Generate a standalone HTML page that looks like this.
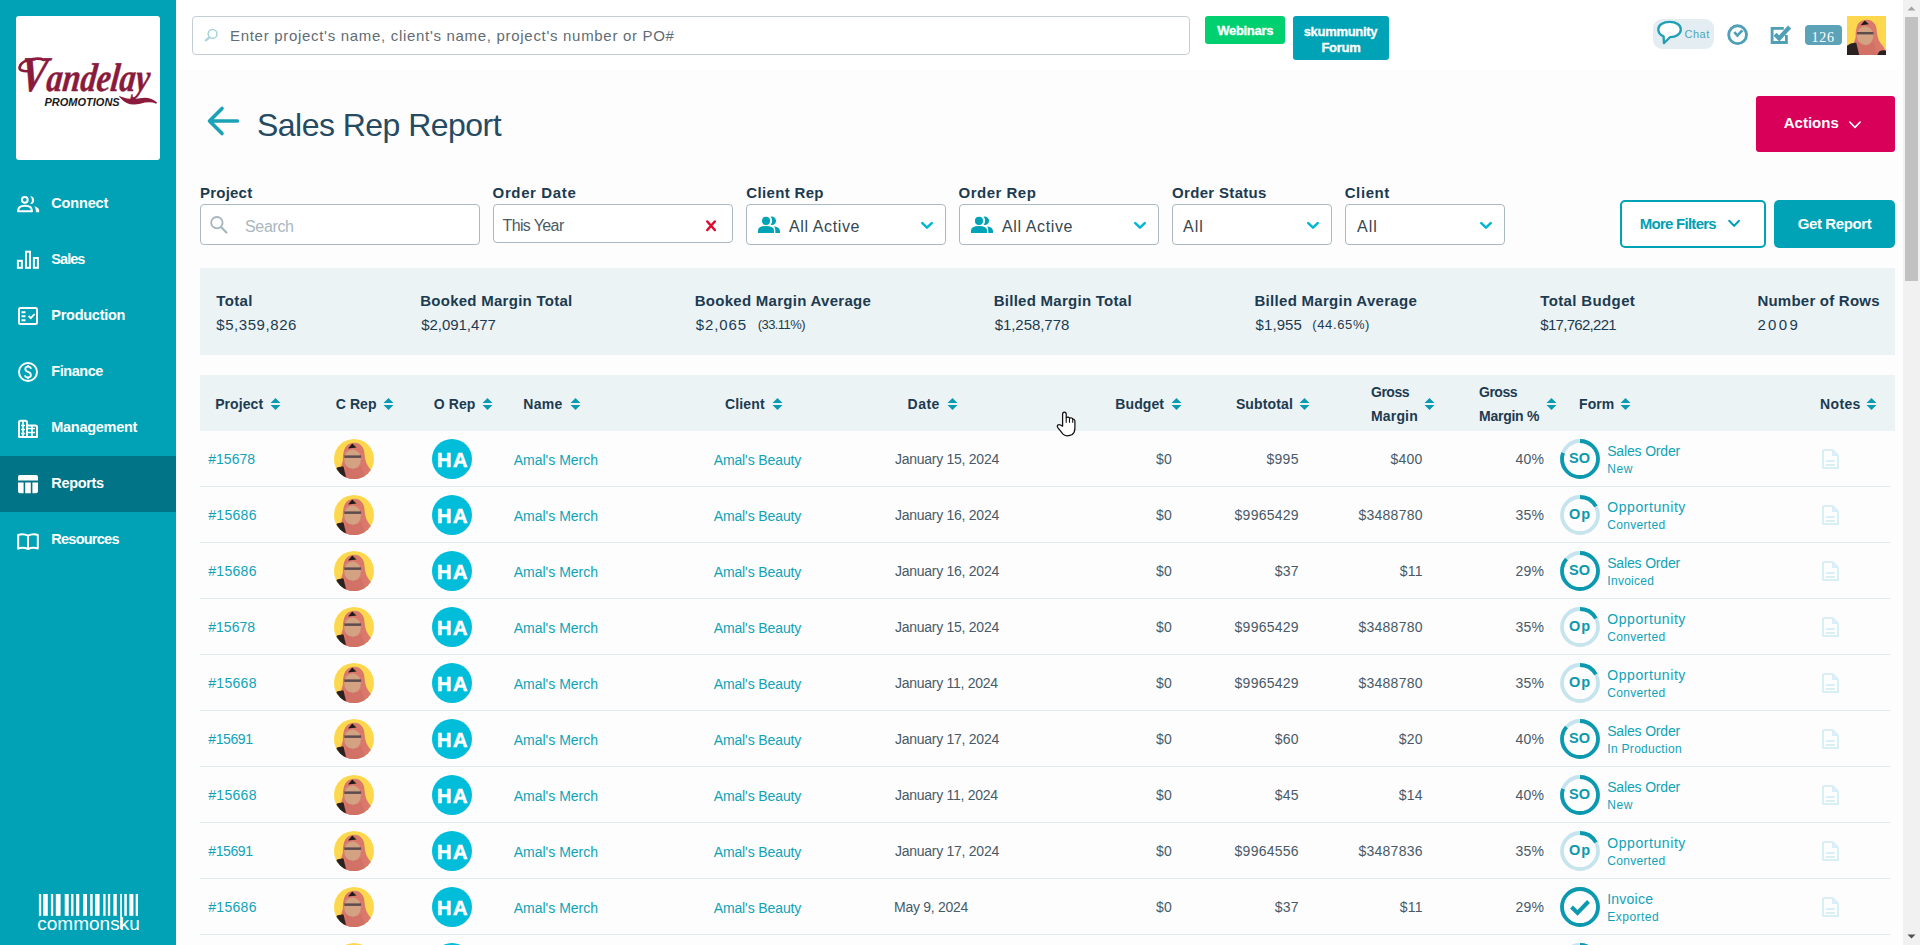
<!DOCTYPE html>
<html><head><meta charset="utf-8">
<style>
*{box-sizing:border-box;margin:0;padding:0}
html,body{width:1920px;height:945px;overflow:hidden;background:#fdfdfd;font-family:"Liberation Sans",sans-serif}
.a{position:absolute}
.t{position:absolute;white-space:nowrap;line-height:1}
</style></head>
<body>
<svg width="0" height="0" style="position:absolute"><defs>
<clipPath id="avc"><circle cx="20" cy="20" r="20"/></clipPath>
<g id="avimg">
<rect width="40" height="40" fill="#fdd84e"/>
<path d="M7.5 40 Q5.5 30 8.8 22 Q8.5 9 14 5.5 Q20 2.5 25.5 5 Q30.5 8.5 30.5 15 Q31 25 37 31 Q39.5 34 39.5 40Z" fill="#da786c"/>
<path d="M14 9.5 L18.2 4.5 L22.5 8.5 Z" fill="#1f1a1a"/>
<ellipse cx="18.6" cy="20.3" rx="8.4" ry="9.8" fill="#d3a283"/>
<rect x="10.3" y="16.4" width="16.8" height="2.5" fill="#5d4b4e"/>
<path d="M11.5 26.5 Q19.5 33.5 27.5 26.5 L31 40 H10Z" fill="#d27166"/>
<path d="M0 40 V30.5 Q4 27 9.5 27.5 L12.5 40 Z" fill="#2a2120"/>
<path d="M31 40 L33 36.5 Q37 34.5 40 35.5 V40 Z" fill="#2a2120"/>
</g>
<g id="av"><g clip-path="url(#avc)"><use href="#avimg"/></g></g>
</defs></svg>
<div class="a" style="left:0;top:0;width:176px;height:945px;background:#01a2b5"></div>
<div class="a" style="left:0;top:456px;width:176px;height:56px;background:#017487"></div>
<div class="a" style="left:16px;top:16px;width:144px;height:144px;background:#fff;border-radius:3px;overflow:hidden">
  <div class="t" style="left:2px;top:33px;font-family:'Liberation Serif',serif;font-style:italic;font-weight:bold;font-size:40px;color:#8a1b3c;-webkit-text-stroke:0.4px #8a1b3c;transform:scaleX(0.8) skewX(-8deg);transform-origin:0 100%"><span style="font-size:50px">V</span>andelay</div>
  <svg class="a" style="left:0;top:0" width="144" height="144" viewBox="16 16 144 144"><path d="M121 97.5 Q128 106 140 103 Q150 100 156.5 103 Q150 97 140 99 Q130 101 121 97.5Z" fill="#8a1b3c" stroke="#8a1b3c" stroke-width="1.5"/><path d="M31 71 Q20 72 19.5 68 Q20 61 33 59 Q40 58 44 60" fill="none" stroke="#8a1b3c" stroke-width="2.6" stroke-linecap="round"/></svg>
  <div class="t" style="left:28.5px;top:81px;font-style:italic;font-weight:bold;font-size:11px;color:#1b1b1b">PROMOTIONS</div>
</div>
<div class="a" style="left:176px;top:0;width:1727px;height:69px;background:#fff"></div>
<div class="a" style="left:192px;top:16px;width:998px;height:39px;border:1px solid #c3ced5;border-radius:4px;background:#fff"></div>
<div class="a" style="left:1205px;top:16px;width:80px;height:28px;background:#00d070;border-radius:3px"></div>
<div class="a" style="left:1293px;top:16px;width:96px;height:44px;background:#00a3b6;border-radius:3px"></div>
<div class="a" style="left:1756px;top:96px;width:139px;height:56px;background:#d9005a;border-radius:3px"></div>
<div class="a" style="left:200px;top:204px;width:280px;height:41px;border:1px solid #aab9c1;border-radius:4px;background:#fff"></div>
<div class="a" style="left:493px;top:204px;width:240px;height:39px;border:1px solid #aab9c1;border-radius:4px;background:#fff"></div>
<div class="a" style="left:746px;top:204px;width:200px;height:41px;border:1px solid #aab9c1;border-radius:4px;background:#fff"></div>
<div class="a" style="left:959px;top:204px;width:200px;height:41px;border:1px solid #aab9c1;border-radius:4px;background:#fff"></div>
<div class="a" style="left:1172px;top:204px;width:160px;height:41px;border:1px solid #aab9c1;border-radius:4px;background:#fff"></div>
<div class="a" style="left:1345px;top:204px;width:160px;height:41px;border:1px solid #aab9c1;border-radius:4px;background:#fff"></div>
<div class="a" style="left:1620px;top:200px;width:146px;height:48px;border:2.6px solid #00a3b6;border-radius:5px;background:#fff"></div>
<div class="a" style="left:1774px;top:200px;width:121px;height:48px;background:#00a3b6;border-radius:5px"></div>
<div class="a" style="left:200px;top:268px;width:1695px;height:87px;background:#ecf3f5"></div>
<div class="a" style="left:200px;top:375px;width:1695px;height:56px;background:#ecf3f5"></div>


<svg class="a" style="left:0;top:176px" width="60" height="392" viewBox="0 176 60 392" fill="none" stroke="#fff" stroke-width="2">
 <circle cx="24.8" cy="199.8" r="2.9"/>
 <path d="M18 211.2 Q18 205.8 25 205.8 Q32 205.8 32 211.2 Z" stroke-linejoin="round"/>
 <path d="M30.2 196.3 A3.9 3.9 0 1 1 30.2 204.1 A5.2 5.2 0 0 0 30.2 196.3Z" fill="#fff" stroke="none"/>
 <path d="M34.3 206.2 Q39.2 207.3 39.2 211 V212.2 H35.9 V211 Q35.9 208 34.3 206.2Z" fill="#fff" stroke="none"/>
 <rect x="17.9" y="260.8" width="4" height="7"/>
 <rect x="26" y="251.7" width="4" height="16.1"/>
 <rect x="33.9" y="258" width="4" height="9.8"/>
 <rect x="19" y="308" width="18" height="16" rx="1.5"/>
 <path d="M21.5 312.2H25.5M21.5 316.2H25.5M21.5 320.2H25.5" stroke-width="1.9"/>
 <path d="M28.6 316 L30.8 318.2 L34.6 314" stroke-width="1.8"/>
 <circle cx="28" cy="372" r="9"/>
 <path d="M31 368.8 Q30.6 366.6 28 366.6 Q25.3 366.6 25.3 369 Q25.3 371 28 371.8 Q30.9 372.7 30.9 375 Q30.9 377.4 28 377.4 Q25.3 377.4 24.9 375.3 M28 365 V366.6 M28 377.4 V379.2" stroke-width="1.8"/>
 <path d="M19 436.9 V422.5 Q19 420.7 20.8 420.7 H25.2 Q27 420.7 27 422.5 V436.9 Z M27 425.4 H35.2 Q37 425.4 37 427.2 V436.9 H19" stroke-linejoin="round"/>
 <path d="M23 421 V437 M21 425.5H25 M21 429.5H25 M21 433.5H25 M27 428.5H30 M27 432.5H30 M32 426V437 M30 428.5H35 M30 432.5H35" stroke-width="1.6"/>
 <path d="M18.2 535 Q23 533 28 535.6 Q33 533 37.8 535 V548.6 Q33 546.8 28 549 Q23 546.8 18.2 548.6 Z M28 535.6 V549" stroke-linejoin="round"/>
</svg>
<svg class="a" style="left:0;top:456px" width="60" height="56" viewBox="0 456 60 56" fill="#fff">
 <path d="M18 477 Q18 475 20 475 H36 Q38 475 38 477 V480.5 H18Z"/>
 <path d="M18 482.5 H23.6 V493.3 H20 Q18 493.3 18 491.3Z M25.2 482.5 H30.8 V493.3 H25.2Z M32.4 482.5 H38 V491.3 Q38 493.3 36 493.3 H32.4Z"/>
</svg><svg class="a" style="left:0;top:880px" width="176" height="60" viewBox="0 880 176 60" fill="#fff"><rect x="38.9" y="894" width="2.30" height="21.8"/><rect x="43.2" y="894" width="4.60" height="21.8"/><rect x="50.9" y="894" width="2.30" height="21.8"/><rect x="55.8" y="894" width="4.80" height="21.8"/><rect x="64.7" y="894" width="4.00" height="21.8"/><rect x="71" y="894" width="2.50" height="21.8"/><rect x="76.1" y="894" width="3.20" height="21.8"/><rect x="83" y="894" width="4.00" height="21.8"/><rect x="90.2" y="894" width="2.50" height="21.8"/><rect x="95" y="894" width="4.60" height="21.8"/><rect x="103.3" y="894" width="2.30" height="21.8"/><rect x="107.9" y="894" width="2.30" height="21.8"/><rect x="113.4" y="894" width="3.40" height="21.8"/><rect x="120.2" y="894" width="1.80" height="35.0"/><rect x="124.3" y="894" width="2.50" height="21.8"/><rect x="129.4" y="894" width="4.00" height="21.8"/><rect x="135.7" y="894" width="2.30" height="21.8"/></svg>
<svg class="a" style="left:200px;top:24px" width="24" height="22" viewBox="200 24 24 22" fill="none" stroke="#aad3df">
 <circle cx="212.6" cy="33.9" r="4.4" stroke-width="1.6"/><path d="M209.3 37.4 L205.9 40.4" stroke-width="2.2" stroke-linecap="round"/>
</svg>
<div class="a" style="left:1653px;top:19px;width:61px;height:30px;border-radius:9px;background:#e4edf2"></div>
<svg class="a" style="left:1650px;top:16px" width="40" height="34" viewBox="1650 16 40 34">
 <path d="M1670 37.2 C1676.2 37.2 1680.8 34 1680.8 29.5 C1680.8 25 1676.2 21.9 1669.6 21.9 C1663 21.9 1658.3 25 1658.3 29.5 C1658.3 32.6 1660.2 35 1663.6 36.4 L1663.9 43.2 Z" fill="#fff" stroke="#1f9fb2" stroke-width="2.3" stroke-linejoin="round"/>
</svg>
<svg class="a" style="left:1720px;top:16px" width="80" height="34" viewBox="1720 16 80 34" fill="none" stroke="#4f9fb6">
 <circle cx="1737.6" cy="34.7" r="8.9" stroke-width="2.9"/>
 <path d="M1734.3 32.2 L1737.4 35.6 L1742.3 30.4" stroke-width="2.7"/>
 <path d="M1786.4 35 V42.5 H1772.1 V28.4 H1783.8" stroke-width="2.8"/>
 <path d="M1775 34.3 L1779.2 38.4 L1789.6 27" stroke-width="4.2"/>
</svg>
<div class="a" style="left:1805px;top:25px;width:37px;height:20px;border-radius:4px;background:#5ca3b8"></div>
<svg class="a" style="left:1847px;top:16px" width="39" height="39" viewBox="0 0 40 40"><use href="#avimg"/></svg>
<svg class="a" style="left:200px;top:100px" width="50" height="44" viewBox="200 100 50 44" fill="none" stroke="#1aa2b6" stroke-width="3.6" stroke-linecap="round" stroke-linejoin="round">
<path d="M237.5 121 H210.5 M222 108.5 L209.5 121 L222 133.5"/></svg>
<svg class="a" style="left:200px;top:204px" width="1310" height="42" viewBox="200 204 1310 42" fill="none">
 <circle cx="216.9" cy="222.7" r="5.7" stroke="#a6b5bd" stroke-width="1.8"/>
 <path d="M221.3 227.3 L226.4 232.5" stroke="#a6b5bd" stroke-width="2.2" stroke-linecap="round"/>
 <path d="M707.3 221.5 L714.8 230 M714.8 221.5 L707.3 230" stroke="#dc0a2e" stroke-width="2.5" stroke-linecap="round"/>
 <path d="M922.3 223.2 L927 227.6 L931.7 223.2" stroke="#00b6d2" stroke-width="2.5" stroke-linecap="round" stroke-linejoin="round"/>
 <path d="M1135.3 223.2 L1140 227.6 L1144.7 223.2" stroke="#00b6d2" stroke-width="2.5" stroke-linecap="round" stroke-linejoin="round"/>
 <path d="M1308.3 223.2 L1313 227.6 L1317.7 223.2" stroke="#00b6d2" stroke-width="2.5" stroke-linecap="round" stroke-linejoin="round"/>
 <path d="M1481.3 223.2 L1486 227.6 L1490.7 223.2" stroke="#00b6d2" stroke-width="2.5" stroke-linecap="round" stroke-linejoin="round"/>
</svg>
<svg class="a" style="left:740px;top:204px" width="420" height="42" viewBox="740 204 420 42" fill="#00a3b6">
 <use href="#ppl"/><use href="#ppl" transform="translate(213 0)"/>
</svg>
<svg width="0" height="0" style="position:absolute"><defs><g id="ppl">
 <circle cx="766" cy="220.9" r="4.05"/>
 <path d="M758 233 V230.5 Q758 225.9 766 225.9 Q774 225.9 774 230.5 V233Z"/>
 <path d="M770.6 216.8 A4.2 4.2 0 1 1 770.6 224.8 A6 6 0 0 0 770.6 216.8Z"/>
 <path d="M774.3 226.3 Q780 227.6 780 231 V233 H775.3 V230.5 Q775.3 228 774.3 226.3Z"/>
</g></defs></svg>
<svg class="a" style="left:1720px;top:110px" width="180" height="130" viewBox="1720 110 180 130" fill="none">
 <path d="M1849.8 122 L1855 127.4 L1860.2 122" stroke="#fff" stroke-width="1.6" stroke-linecap="round" stroke-linejoin="round"/>
 <path d="M1729.2 220.7 L1734.1 225.9 L1739 220.7" stroke="#00a0b4" stroke-width="2" stroke-linecap="round" stroke-linejoin="round"/>
</svg>
<svg class="a" style="left:270px;top:398px" width="11" height="12" viewBox="0 0 11 12"><path d="M5.5 0L10.5 5H0.5Z M0.5 7H10.5L5.5 12Z" fill="#0b9bb0"/></svg><svg class="a" style="left:383px;top:398px" width="11" height="12" viewBox="0 0 11 12"><path d="M5.5 0L10.5 5H0.5Z M0.5 7H10.5L5.5 12Z" fill="#0b9bb0"/></svg><svg class="a" style="left:482px;top:398px" width="11" height="12" viewBox="0 0 11 12"><path d="M5.5 0L10.5 5H0.5Z M0.5 7H10.5L5.5 12Z" fill="#0b9bb0"/></svg><svg class="a" style="left:570px;top:398px" width="11" height="12" viewBox="0 0 11 12"><path d="M5.5 0L10.5 5H0.5Z M0.5 7H10.5L5.5 12Z" fill="#0b9bb0"/></svg><svg class="a" style="left:772px;top:398px" width="11" height="12" viewBox="0 0 11 12"><path d="M5.5 0L10.5 5H0.5Z M0.5 7H10.5L5.5 12Z" fill="#0b9bb0"/></svg><svg class="a" style="left:947px;top:398px" width="11" height="12" viewBox="0 0 11 12"><path d="M5.5 0L10.5 5H0.5Z M0.5 7H10.5L5.5 12Z" fill="#0b9bb0"/></svg><svg class="a" style="left:1171px;top:398px" width="11" height="12" viewBox="0 0 11 12"><path d="M5.5 0L10.5 5H0.5Z M0.5 7H10.5L5.5 12Z" fill="#0b9bb0"/></svg><svg class="a" style="left:1299px;top:398px" width="11" height="12" viewBox="0 0 11 12"><path d="M5.5 0L10.5 5H0.5Z M0.5 7H10.5L5.5 12Z" fill="#0b9bb0"/></svg><svg class="a" style="left:1424px;top:398px" width="11" height="12" viewBox="0 0 11 12"><path d="M5.5 0L10.5 5H0.5Z M0.5 7H10.5L5.5 12Z" fill="#0b9bb0"/></svg><svg class="a" style="left:1546px;top:398px" width="11" height="12" viewBox="0 0 11 12"><path d="M5.5 0L10.5 5H0.5Z M0.5 7H10.5L5.5 12Z" fill="#0b9bb0"/></svg><svg class="a" style="left:1620px;top:398px" width="11" height="12" viewBox="0 0 11 12"><path d="M5.5 0L10.5 5H0.5Z M0.5 7H10.5L5.5 12Z" fill="#0b9bb0"/></svg><svg class="a" style="left:1866px;top:398px" width="11" height="12" viewBox="0 0 11 12"><path d="M5.5 0L10.5 5H0.5Z M0.5 7H10.5L5.5 12Z" fill="#0b9bb0"/></svg><svg class="a" style="left:334px;top:439px" width="40" height="40" viewBox="0 0 40 40"><use href="#av"/></svg><div class="a" style="left:432px;top:439px;width:40px;height:40px;border-radius:50%;background:#00bdd9"></div><svg class="a" style="left:1560px;top:439px" width="40" height="40" viewBox="0 0 40 40"><circle cx="20" cy="20" r="18" fill="none" stroke="#c6e4ed" stroke-width="3.8"/><circle cx="20" cy="20" r="18" fill="none" stroke="#0a99ae" stroke-width="3.8" stroke-dasharray="90.48 113.10" transform="rotate(-90 20 20)"/></svg><svg class="a" style="left:1822px;top:449px" width="17" height="20" viewBox="0 0 17 20"><path d="M2 1 H10.5 L16 6.5 V19 H1 V2 Z" fill="none" stroke="#d9eff6" stroke-width="2" stroke-linejoin="round"/><path d="M10 1 V7 H16Z" fill="#d9eff6"/><path d="M4 12H13M4 16H13" stroke="#d9eff6" stroke-width="2"/></svg><div class="a" style="left:200px;top:486px;width:1690px;height:1px;background:#dfeaee"></div>
<svg class="a" style="left:334px;top:495px" width="40" height="40" viewBox="0 0 40 40"><use href="#av"/></svg><div class="a" style="left:432px;top:495px;width:40px;height:40px;border-radius:50%;background:#00bdd9"></div><svg class="a" style="left:1560px;top:495px" width="40" height="40" viewBox="0 0 40 40"><circle cx="20" cy="20" r="18" fill="none" stroke="#c6e4ed" stroke-width="3.8"/><circle cx="20" cy="20" r="18" fill="none" stroke="#0a99ae" stroke-width="3.8" stroke-dasharray="19.23 113.10" transform="rotate(-90 20 20)"/></svg><svg class="a" style="left:1822px;top:505px" width="17" height="20" viewBox="0 0 17 20"><path d="M2 1 H10.5 L16 6.5 V19 H1 V2 Z" fill="none" stroke="#d9eff6" stroke-width="2" stroke-linejoin="round"/><path d="M10 1 V7 H16Z" fill="#d9eff6"/><path d="M4 12H13M4 16H13" stroke="#d9eff6" stroke-width="2"/></svg><div class="a" style="left:200px;top:542px;width:1690px;height:1px;background:#dfeaee"></div>
<svg class="a" style="left:334px;top:551px" width="40" height="40" viewBox="0 0 40 40"><use href="#av"/></svg><div class="a" style="left:432px;top:551px;width:40px;height:40px;border-radius:50%;background:#00bdd9"></div><svg class="a" style="left:1560px;top:551px" width="40" height="40" viewBox="0 0 40 40"><circle cx="20" cy="20" r="18" fill="none" stroke="#c6e4ed" stroke-width="3.8"/><circle cx="20" cy="20" r="18" fill="none" stroke="#0a99ae" stroke-width="3.8" stroke-dasharray="97.26 113.10" transform="rotate(-90 20 20)"/></svg><svg class="a" style="left:1822px;top:561px" width="17" height="20" viewBox="0 0 17 20"><path d="M2 1 H10.5 L16 6.5 V19 H1 V2 Z" fill="none" stroke="#d9eff6" stroke-width="2" stroke-linejoin="round"/><path d="M10 1 V7 H16Z" fill="#d9eff6"/><path d="M4 12H13M4 16H13" stroke="#d9eff6" stroke-width="2"/></svg><div class="a" style="left:200px;top:598px;width:1690px;height:1px;background:#dfeaee"></div>
<svg class="a" style="left:334px;top:607px" width="40" height="40" viewBox="0 0 40 40"><use href="#av"/></svg><div class="a" style="left:432px;top:607px;width:40px;height:40px;border-radius:50%;background:#00bdd9"></div><svg class="a" style="left:1560px;top:607px" width="40" height="40" viewBox="0 0 40 40"><circle cx="20" cy="20" r="18" fill="none" stroke="#c6e4ed" stroke-width="3.8"/><circle cx="20" cy="20" r="18" fill="none" stroke="#0a99ae" stroke-width="3.8" stroke-dasharray="19.23 113.10" transform="rotate(-90 20 20)"/></svg><svg class="a" style="left:1822px;top:617px" width="17" height="20" viewBox="0 0 17 20"><path d="M2 1 H10.5 L16 6.5 V19 H1 V2 Z" fill="none" stroke="#d9eff6" stroke-width="2" stroke-linejoin="round"/><path d="M10 1 V7 H16Z" fill="#d9eff6"/><path d="M4 12H13M4 16H13" stroke="#d9eff6" stroke-width="2"/></svg><div class="a" style="left:200px;top:654px;width:1690px;height:1px;background:#dfeaee"></div>
<svg class="a" style="left:334px;top:663px" width="40" height="40" viewBox="0 0 40 40"><use href="#av"/></svg><div class="a" style="left:432px;top:663px;width:40px;height:40px;border-radius:50%;background:#00bdd9"></div><svg class="a" style="left:1560px;top:663px" width="40" height="40" viewBox="0 0 40 40"><circle cx="20" cy="20" r="18" fill="none" stroke="#c6e4ed" stroke-width="3.8"/><circle cx="20" cy="20" r="18" fill="none" stroke="#0a99ae" stroke-width="3.8" stroke-dasharray="19.23 113.10" transform="rotate(-90 20 20)"/></svg><svg class="a" style="left:1822px;top:673px" width="17" height="20" viewBox="0 0 17 20"><path d="M2 1 H10.5 L16 6.5 V19 H1 V2 Z" fill="none" stroke="#d9eff6" stroke-width="2" stroke-linejoin="round"/><path d="M10 1 V7 H16Z" fill="#d9eff6"/><path d="M4 12H13M4 16H13" stroke="#d9eff6" stroke-width="2"/></svg><div class="a" style="left:200px;top:710px;width:1690px;height:1px;background:#dfeaee"></div>
<svg class="a" style="left:334px;top:719px" width="40" height="40" viewBox="0 0 40 40"><use href="#av"/></svg><div class="a" style="left:432px;top:719px;width:40px;height:40px;border-radius:50%;background:#00bdd9"></div><svg class="a" style="left:1560px;top:719px" width="40" height="40" viewBox="0 0 40 40"><circle cx="20" cy="20" r="18" fill="none" stroke="#c6e4ed" stroke-width="3.8"/><circle cx="20" cy="20" r="18" fill="none" stroke="#0a99ae" stroke-width="3.8" stroke-dasharray="97.26 113.10" transform="rotate(-90 20 20)"/></svg><svg class="a" style="left:1822px;top:729px" width="17" height="20" viewBox="0 0 17 20"><path d="M2 1 H10.5 L16 6.5 V19 H1 V2 Z" fill="none" stroke="#d9eff6" stroke-width="2" stroke-linejoin="round"/><path d="M10 1 V7 H16Z" fill="#d9eff6"/><path d="M4 12H13M4 16H13" stroke="#d9eff6" stroke-width="2"/></svg><div class="a" style="left:200px;top:766px;width:1690px;height:1px;background:#dfeaee"></div>
<svg class="a" style="left:334px;top:775px" width="40" height="40" viewBox="0 0 40 40"><use href="#av"/></svg><div class="a" style="left:432px;top:775px;width:40px;height:40px;border-radius:50%;background:#00bdd9"></div><svg class="a" style="left:1560px;top:775px" width="40" height="40" viewBox="0 0 40 40"><circle cx="20" cy="20" r="18" fill="none" stroke="#c6e4ed" stroke-width="3.8"/><circle cx="20" cy="20" r="18" fill="none" stroke="#0a99ae" stroke-width="3.8" stroke-dasharray="90.48 113.10" transform="rotate(-90 20 20)"/></svg><svg class="a" style="left:1822px;top:785px" width="17" height="20" viewBox="0 0 17 20"><path d="M2 1 H10.5 L16 6.5 V19 H1 V2 Z" fill="none" stroke="#d9eff6" stroke-width="2" stroke-linejoin="round"/><path d="M10 1 V7 H16Z" fill="#d9eff6"/><path d="M4 12H13M4 16H13" stroke="#d9eff6" stroke-width="2"/></svg><div class="a" style="left:200px;top:822px;width:1690px;height:1px;background:#dfeaee"></div>
<svg class="a" style="left:334px;top:831px" width="40" height="40" viewBox="0 0 40 40"><use href="#av"/></svg><div class="a" style="left:432px;top:831px;width:40px;height:40px;border-radius:50%;background:#00bdd9"></div><svg class="a" style="left:1560px;top:831px" width="40" height="40" viewBox="0 0 40 40"><circle cx="20" cy="20" r="18" fill="none" stroke="#c6e4ed" stroke-width="3.8"/><circle cx="20" cy="20" r="18" fill="none" stroke="#0a99ae" stroke-width="3.8" stroke-dasharray="19.23 113.10" transform="rotate(-90 20 20)"/></svg><svg class="a" style="left:1822px;top:841px" width="17" height="20" viewBox="0 0 17 20"><path d="M2 1 H10.5 L16 6.5 V19 H1 V2 Z" fill="none" stroke="#d9eff6" stroke-width="2" stroke-linejoin="round"/><path d="M10 1 V7 H16Z" fill="#d9eff6"/><path d="M4 12H13M4 16H13" stroke="#d9eff6" stroke-width="2"/></svg><div class="a" style="left:200px;top:878px;width:1690px;height:1px;background:#dfeaee"></div>
<svg class="a" style="left:334px;top:887px" width="40" height="40" viewBox="0 0 40 40"><use href="#av"/></svg><div class="a" style="left:432px;top:887px;width:40px;height:40px;border-radius:50%;background:#00bdd9"></div><svg class="a" style="left:1560px;top:887px" width="40" height="40" viewBox="0 0 40 40"><circle cx="20" cy="20" r="18" fill="none" stroke="#c6e4ed" stroke-width="3.8"/><circle cx="20" cy="20" r="18" fill="none" stroke="#0a99ae" stroke-width="3.8"/><path d="M11.5 20 L17.5 26 L28.5 14.5" fill="none" stroke="#0a99ae" stroke-width="4"/></svg><svg class="a" style="left:1822px;top:897px" width="17" height="20" viewBox="0 0 17 20"><path d="M2 1 H10.5 L16 6.5 V19 H1 V2 Z" fill="none" stroke="#d9eff6" stroke-width="2" stroke-linejoin="round"/><path d="M10 1 V7 H16Z" fill="#d9eff6"/><path d="M4 12H13M4 16H13" stroke="#d9eff6" stroke-width="2"/></svg><div class="a" style="left:200px;top:934px;width:1690px;height:1px;background:#dfeaee"></div>
<svg class="a" style="left:334px;top:943px" width="40" height="40" viewBox="0 0 40 40"><use href="#av"/></svg><div class="a" style="left:432px;top:943px;width:40px;height:40px;border-radius:50%;background:#00bdd9"></div><svg class="a" style="left:1560px;top:943px" width="40" height="40" viewBox="0 0 40 40"><circle cx="20" cy="20" r="18" fill="none" stroke="#c6e4ed" stroke-width="3.8"/><circle cx="20" cy="20" r="18" fill="none" stroke="#0a99ae" stroke-width="3.8" stroke-dasharray="90.48 113.10" transform="rotate(-90 20 20)"/></svg><svg class="a" style="left:1822px;top:953px" width="17" height="20" viewBox="0 0 17 20"><path d="M2 1 H10.5 L16 6.5 V19 H1 V2 Z" fill="none" stroke="#d9eff6" stroke-width="2" stroke-linejoin="round"/><path d="M10 1 V7 H16Z" fill="#d9eff6"/><path d="M4 12H13M4 16H13" stroke="#d9eff6" stroke-width="2"/></svg><div class="a" style="left:200px;top:990px;width:1690px;height:1px;background:#dfeaee"></div>
<div class="a" style="left:1903px;top:0;width:17px;height:945px;background:#f1f1f1"></div>
<div class="a" style="left:1905px;top:17px;width:13px;height:264px;background:#c1c1c1"></div>
<svg class="a" style="left:1903px;top:0" width="17" height="17" viewBox="0 0 17 17"><path d="M4.5 10.5 L8.5 6.5 L12.5 10.5Z" fill="#a3a3a3"/></svg>
<svg class="a" style="left:1903px;top:928px" width="17" height="17" viewBox="0 0 17 17"><path d="M4.5 6.5 L8.5 10.5 L12.5 6.5Z" fill="#505050"/></svg>
<div class="t" style="left:51.30px;top:195.90px;font-family:'Liberation Sans',sans-serif;font-size:14.5px;font-weight:bold;letter-spacing:-0.167px;color:#ffffff;">Connect</div>
<div class="t" style="left:51.30px;top:251.90px;font-family:'Liberation Sans',sans-serif;font-size:14.5px;font-weight:bold;letter-spacing:-0.950px;color:#ffffff;">Sales</div>
<div class="t" style="left:51.30px;top:307.90px;font-family:'Liberation Sans',sans-serif;font-size:14.5px;font-weight:bold;letter-spacing:-0.267px;color:#ffffff;">Production</div>
<div class="t" style="left:51.30px;top:363.90px;font-family:'Liberation Sans',sans-serif;font-size:14.5px;font-weight:bold;letter-spacing:-0.467px;color:#ffffff;">Finance</div>
<div class="t" style="left:51.30px;top:419.90px;font-family:'Liberation Sans',sans-serif;font-size:14.5px;font-weight:bold;letter-spacing:-0.289px;color:#ffffff;">Management</div>
<div class="t" style="left:51.30px;top:475.90px;font-family:'Liberation Sans',sans-serif;font-size:14.5px;font-weight:bold;letter-spacing:-0.333px;color:#ffffff;">Reports</div>
<div class="t" style="left:51.30px;top:531.90px;font-family:'Liberation Sans',sans-serif;font-size:14.5px;font-weight:bold;letter-spacing:-0.750px;color:#ffffff;">Resources</div>
<div class="t" style="left:230.00px;top:27.50px;font-family:'Liberation Sans',sans-serif;font-size:15px;font-weight:normal;letter-spacing:0.695px;color:#626c74;">Enter project's name, client's name, project's number or PO#</div>
<div class="t" style="left:1217.20px;top:23.90px;font-family:'Liberation Sans',sans-serif;font-size:13px;font-weight:bold;letter-spacing:-0.286px;color:#fff;-webkit-text-stroke:0.3px #fff">Webinars</div>
<div class="t" style="left:1303.70px;top:24.50px;font-family:'Liberation Sans',sans-serif;font-size:13px;font-weight:bold;letter-spacing:-0.300px;color:#fff;-webkit-text-stroke:0.3px #fff">skummunity</div>
<div class="t" style="left:1321.40px;top:41.30px;font-family:'Liberation Sans',sans-serif;font-size:13px;font-weight:bold;letter-spacing:-0.250px;color:#fff;-webkit-text-stroke:0.3px #fff">Forum</div>
<div class="t" style="left:1684.50px;top:29.30px;font-family:'Liberation Sans',sans-serif;font-size:11px;font-weight:normal;letter-spacing:0.500px;color:#4aa8b8;">Chat</div>
<div class="t" style="left:1811.50px;top:30.50px;font-family:'Liberation Serif',serif;font-size:14px;font-weight:normal;letter-spacing:0.750px;color:#fff;">126</div>
<div class="t" style="left:257.00px;top:108.60px;font-family:'Liberation Sans',sans-serif;font-size:32px;font-weight:normal;letter-spacing:-0.533px;color:#254a62;">Sales Rep Report</div>
<div class="t" style="left:1783.75px;top:115.30px;font-family:'Liberation Sans',sans-serif;font-size:15px;font-weight:bold;letter-spacing:0.000px;color:#fff;">Actions</div>
<div class="t" style="left:200.00px;top:185.00px;font-family:'Liberation Sans',sans-serif;font-size:15px;font-weight:bold;letter-spacing:0.217px;color:#1c3b50;">Project</div>
<div class="t" style="left:492.60px;top:185.00px;font-family:'Liberation Sans',sans-serif;font-size:15px;font-weight:bold;letter-spacing:0.622px;color:#1c3b50;">Order Date</div>
<div class="t" style="left:746.30px;top:185.00px;font-family:'Liberation Sans',sans-serif;font-size:15px;font-weight:bold;letter-spacing:0.333px;color:#1c3b50;">Client Rep</div>
<div class="t" style="left:958.50px;top:185.00px;font-family:'Liberation Sans',sans-serif;font-size:15px;font-weight:bold;letter-spacing:0.500px;color:#1c3b50;">Order Rep</div>
<div class="t" style="left:1172.00px;top:185.00px;font-family:'Liberation Sans',sans-serif;font-size:15px;font-weight:bold;letter-spacing:0.327px;color:#1c3b50;">Order Status</div>
<div class="t" style="left:1344.70px;top:185.00px;font-family:'Liberation Sans',sans-serif;font-size:15px;font-weight:bold;letter-spacing:0.600px;color:#1c3b50;">Client</div>
<div class="t" style="left:245.00px;top:219.30px;font-family:'Liberation Sans',sans-serif;font-size:16px;font-weight:normal;letter-spacing:-0.340px;color:#a9b7bf;">Search</div>
<div class="t" style="left:502.50px;top:217.70px;font-family:'Liberation Sans',sans-serif;font-size:16px;font-weight:normal;letter-spacing:-0.625px;color:#4d5b64;">This Year</div>
<div class="t" style="left:789.00px;top:219.30px;font-family:'Liberation Sans',sans-serif;font-size:16px;font-weight:normal;letter-spacing:0.611px;color:#36474f;">All Active</div>
<div class="t" style="left:1002.00px;top:219.30px;font-family:'Liberation Sans',sans-serif;font-size:16px;font-weight:normal;letter-spacing:0.611px;color:#36474f;">All Active</div>
<div class="t" style="left:1183.00px;top:219.30px;font-family:'Liberation Sans',sans-serif;font-size:16px;font-weight:normal;letter-spacing:1.000px;color:#36474f;">All</div>
<div class="t" style="left:1357.00px;top:219.30px;font-family:'Liberation Sans',sans-serif;font-size:16px;font-weight:normal;letter-spacing:1.000px;color:#36474f;">All</div>
<div class="t" style="left:1639.70px;top:215.90px;font-family:'Liberation Sans',sans-serif;font-size:15px;font-weight:bold;letter-spacing:-0.727px;color:#00a0b4;">More Filters</div>
<div class="t" style="left:1797.70px;top:215.90px;font-family:'Liberation Sans',sans-serif;font-size:15px;font-weight:bold;letter-spacing:-0.378px;color:#fff;">Get Report</div>
<div class="t" style="left:216.30px;top:292.50px;font-family:'Liberation Sans',sans-serif;font-size:15px;font-weight:bold;letter-spacing:0.350px;color:#1c3b50;">Total</div>
<div class="t" style="left:216.30px;top:316.60px;font-family:'Liberation Sans',sans-serif;font-size:15px;font-weight:normal;letter-spacing:0.556px;color:#1c3b50;">$5,359,826</div>
<div class="t" style="left:420.20px;top:292.50px;font-family:'Liberation Sans',sans-serif;font-size:15px;font-weight:bold;letter-spacing:0.267px;color:#1c3b50;">Booked Margin Total</div>
<div class="t" style="left:421.20px;top:316.60px;font-family:'Liberation Sans',sans-serif;font-size:15px;font-weight:normal;letter-spacing:-0.033px;color:#1c3b50;">$2,091,477</div>
<div class="t" style="left:694.70px;top:292.50px;font-family:'Liberation Sans',sans-serif;font-size:15px;font-weight:bold;letter-spacing:0.275px;color:#1c3b50;">Booked Margin Average</div>
<div class="t" style="left:695.70px;top:316.60px;font-family:'Liberation Sans',sans-serif;font-size:15px;font-weight:normal;letter-spacing:0.900px;color:#1c3b50;">$2,065</div>
<div class="t" style="left:757.75px;top:317.60px;font-family:'Liberation Sans',sans-serif;font-size:13px;font-weight:normal;letter-spacing:-0.571px;color:#1c3b50;">(33.11%)</div>
<div class="t" style="left:993.70px;top:292.50px;font-family:'Liberation Sans',sans-serif;font-size:15px;font-weight:bold;letter-spacing:0.267px;color:#1c3b50;">Billed Margin Total</div>
<div class="t" style="left:994.70px;top:316.60px;font-family:'Liberation Sans',sans-serif;font-size:15px;font-weight:normal;letter-spacing:-0.056px;color:#1c3b50;">$1,258,778</div>
<div class="t" style="left:1254.50px;top:292.50px;font-family:'Liberation Sans',sans-serif;font-size:15px;font-weight:bold;letter-spacing:0.290px;color:#1c3b50;">Billed Margin Average</div>
<div class="t" style="left:1255.50px;top:316.60px;font-family:'Liberation Sans',sans-serif;font-size:15px;font-weight:normal;letter-spacing:0.100px;color:#1c3b50;">$1,955</div>
<div class="t" style="left:1312.30px;top:317.60px;font-family:'Liberation Sans',sans-serif;font-size:13px;font-weight:normal;letter-spacing:0.629px;color:#1c3b50;">(44.65%)</div>
<div class="t" style="left:1540.30px;top:292.50px;font-family:'Liberation Sans',sans-serif;font-size:15px;font-weight:bold;letter-spacing:0.364px;color:#1c3b50;">Total Budget</div>
<div class="t" style="left:1540.30px;top:316.60px;font-family:'Liberation Sans',sans-serif;font-size:15px;font-weight:normal;letter-spacing:-0.700px;color:#1c3b50;">$17,762,221</div>
<div class="t" style="left:1757.40px;top:292.50px;font-family:'Liberation Sans',sans-serif;font-size:15px;font-weight:bold;letter-spacing:0.231px;color:#1c3b50;">Number of Rows</div>
<div class="t" style="left:1757.40px;top:316.60px;font-family:'Liberation Sans',sans-serif;font-size:15px;font-weight:normal;letter-spacing:2.333px;color:#1c3b50;">2009</div>
<div class="t" style="left:215.20px;top:396.70px;font-family:'Liberation Sans',sans-serif;font-size:14px;font-weight:bold;letter-spacing:0.067px;color:#1c3b50;">Project</div>
<div class="t" style="left:335.80px;top:396.70px;font-family:'Liberation Sans',sans-serif;font-size:14px;font-weight:bold;letter-spacing:0.050px;color:#1c3b50;">C Rep</div>
<div class="t" style="left:433.70px;top:396.70px;font-family:'Liberation Sans',sans-serif;font-size:14px;font-weight:bold;letter-spacing:0.125px;color:#1c3b50;">O Rep</div>
<div class="t" style="left:523.20px;top:396.70px;font-family:'Liberation Sans',sans-serif;font-size:14px;font-weight:bold;letter-spacing:0.333px;color:#1c3b50;">Name</div>
<div class="t" style="left:724.90px;top:396.70px;font-family:'Liberation Sans',sans-serif;font-size:14px;font-weight:bold;letter-spacing:0.160px;color:#1c3b50;">Client</div>
<div class="t" style="left:907.60px;top:396.70px;font-family:'Liberation Sans',sans-serif;font-size:14px;font-weight:bold;letter-spacing:0.467px;color:#1c3b50;">Date</div>
<div class="t" style="left:1115.30px;top:396.70px;font-family:'Liberation Sans',sans-serif;font-size:14px;font-weight:bold;letter-spacing:0.100px;color:#1c3b50;">Budget</div>
<div class="t" style="left:1235.90px;top:396.70px;font-family:'Liberation Sans',sans-serif;font-size:14px;font-weight:bold;letter-spacing:0.143px;color:#1c3b50;">Subtotal</div>
<div class="t" style="left:1579.00px;top:396.70px;font-family:'Liberation Sans',sans-serif;font-size:14px;font-weight:bold;letter-spacing:0.100px;color:#1c3b50;">Form</div>
<div class="t" style="left:1820.00px;top:396.70px;font-family:'Liberation Sans',sans-serif;font-size:14px;font-weight:bold;letter-spacing:0.375px;color:#1c3b50;">Notes</div>
<div class="t" style="left:1371.00px;top:384.80px;font-family:'Liberation Sans',sans-serif;font-size:14px;font-weight:bold;letter-spacing:-0.500px;color:#1c3b50;">Gross</div>
<div class="t" style="left:1371.00px;top:409.30px;font-family:'Liberation Sans',sans-serif;font-size:14px;font-weight:bold;letter-spacing:0.160px;color:#1c3b50;">Margin</div>
<div class="t" style="left:1479.00px;top:384.80px;font-family:'Liberation Sans',sans-serif;font-size:14px;font-weight:bold;letter-spacing:-0.500px;color:#1c3b50;">Gross</div>
<div class="t" style="left:1479.00px;top:409.30px;font-family:'Liberation Sans',sans-serif;font-size:14px;font-weight:bold;letter-spacing:-0.243px;color:#1c3b50;">Margin %</div>
<div class="t" style="left:208.30px;top:452.00px;font-family:'Liberation Sans',sans-serif;font-size:14px;font-weight:normal;letter-spacing:0.000px;color:#0fa3b8;">#15678</div>
<div class="t" style="left:513.70px;top:452.50px;font-family:'Liberation Sans',sans-serif;font-size:14px;font-weight:normal;letter-spacing:0.000px;color:#0fa3b8;">Amal's Merch</div>
<div class="t" style="left:713.70px;top:452.50px;font-family:'Liberation Sans',sans-serif;font-size:14px;font-weight:normal;letter-spacing:-0.117px;color:#0fa3b8;">Amal's Beauty</div>
<div class="t" style="left:895.00px;top:452.30px;font-family:'Liberation Sans',sans-serif;font-size:14px;font-weight:normal;letter-spacing:-0.267px;color:#475a68;">January 15, 2024</div>
<div class="t" style="left:1156.06px;top:451.60px;font-family:'Liberation Sans',sans-serif;font-size:14px;font-weight:normal;letter-spacing:0.243px;color:#475a68;">$0</div>
<div class="t" style="left:1266.57px;top:451.60px;font-family:'Liberation Sans',sans-serif;font-size:14px;font-weight:normal;letter-spacing:0.243px;color:#475a68;">$995</div>
<div class="t" style="left:1390.47px;top:451.60px;font-family:'Liberation Sans',sans-serif;font-size:14px;font-weight:normal;letter-spacing:0.243px;color:#475a68;">$400</div>
<div class="t" style="left:1515.50px;top:451.60px;font-family:'Liberation Sans',sans-serif;font-size:14px;font-weight:normal;letter-spacing:0.250px;color:#475a68;">40%</div>
<div class="t" style="left:1607.20px;top:444.40px;font-family:'Liberation Sans',sans-serif;font-size:14px;font-weight:normal;letter-spacing:-0.160px;color:#0fa3b8;">Sales Order</div>
<div class="t" style="left:1607.30px;top:462.50px;font-family:'Liberation Sans',sans-serif;font-size:12px;font-weight:normal;letter-spacing:0.500px;color:#0fa3b8;">New</div>
<div class="t" style="left:1569.00px;top:450.90px;font-family:'Liberation Sans',sans-serif;font-size:14.5px;font-weight:bold;letter-spacing:0.000px;color:#0a99ae;">SO</div>
<div class="t" style="left:208.30px;top:508.00px;font-family:'Liberation Sans',sans-serif;font-size:14px;font-weight:normal;letter-spacing:0.280px;color:#0fa3b8;">#15686</div>
<div class="t" style="left:513.70px;top:508.50px;font-family:'Liberation Sans',sans-serif;font-size:14px;font-weight:normal;letter-spacing:0.000px;color:#0fa3b8;">Amal's Merch</div>
<div class="t" style="left:713.70px;top:508.50px;font-family:'Liberation Sans',sans-serif;font-size:14px;font-weight:normal;letter-spacing:-0.117px;color:#0fa3b8;">Amal's Beauty</div>
<div class="t" style="left:895.00px;top:508.30px;font-family:'Liberation Sans',sans-serif;font-size:14px;font-weight:normal;letter-spacing:-0.267px;color:#475a68;">January 16, 2024</div>
<div class="t" style="left:1156.06px;top:507.60px;font-family:'Liberation Sans',sans-serif;font-size:14px;font-weight:normal;letter-spacing:0.243px;color:#475a68;">$0</div>
<div class="t" style="left:1234.60px;top:507.60px;font-family:'Liberation Sans',sans-serif;font-size:14px;font-weight:normal;letter-spacing:0.243px;color:#475a68;">$9965429</div>
<div class="t" style="left:1358.50px;top:507.60px;font-family:'Liberation Sans',sans-serif;font-size:14px;font-weight:normal;letter-spacing:0.243px;color:#475a68;">$3488780</div>
<div class="t" style="left:1515.50px;top:507.60px;font-family:'Liberation Sans',sans-serif;font-size:14px;font-weight:normal;letter-spacing:0.250px;color:#475a68;">35%</div>
<div class="t" style="left:1607.20px;top:500.40px;font-family:'Liberation Sans',sans-serif;font-size:14px;font-weight:normal;letter-spacing:0.580px;color:#0fa3b8;">Opportunity</div>
<div class="t" style="left:1607.30px;top:518.50px;font-family:'Liberation Sans',sans-serif;font-size:12px;font-weight:normal;letter-spacing:0.300px;color:#0fa3b8;">Converted</div>
<div class="t" style="left:1569.00px;top:506.90px;font-family:'Liberation Sans',sans-serif;font-size:14.5px;font-weight:bold;letter-spacing:1.000px;color:#0a99ae;">Op</div>
<div class="t" style="left:208.30px;top:564.00px;font-family:'Liberation Sans',sans-serif;font-size:14px;font-weight:normal;letter-spacing:0.280px;color:#0fa3b8;">#15686</div>
<div class="t" style="left:513.70px;top:564.50px;font-family:'Liberation Sans',sans-serif;font-size:14px;font-weight:normal;letter-spacing:0.000px;color:#0fa3b8;">Amal's Merch</div>
<div class="t" style="left:713.70px;top:564.50px;font-family:'Liberation Sans',sans-serif;font-size:14px;font-weight:normal;letter-spacing:-0.117px;color:#0fa3b8;">Amal's Beauty</div>
<div class="t" style="left:895.00px;top:564.30px;font-family:'Liberation Sans',sans-serif;font-size:14px;font-weight:normal;letter-spacing:-0.267px;color:#475a68;">January 16, 2024</div>
<div class="t" style="left:1156.06px;top:563.60px;font-family:'Liberation Sans',sans-serif;font-size:14px;font-weight:normal;letter-spacing:0.243px;color:#475a68;">$0</div>
<div class="t" style="left:1274.81px;top:563.60px;font-family:'Liberation Sans',sans-serif;font-size:14px;font-weight:normal;letter-spacing:0.243px;color:#475a68;">$37</div>
<div class="t" style="left:1399.71px;top:563.60px;font-family:'Liberation Sans',sans-serif;font-size:14px;font-weight:normal;letter-spacing:0.243px;color:#475a68;">$11</div>
<div class="t" style="left:1515.50px;top:563.60px;font-family:'Liberation Sans',sans-serif;font-size:14px;font-weight:normal;letter-spacing:0.250px;color:#475a68;">29%</div>
<div class="t" style="left:1607.20px;top:556.40px;font-family:'Liberation Sans',sans-serif;font-size:14px;font-weight:normal;letter-spacing:-0.160px;color:#0fa3b8;">Sales Order</div>
<div class="t" style="left:1607.30px;top:574.50px;font-family:'Liberation Sans',sans-serif;font-size:12px;font-weight:normal;letter-spacing:0.286px;color:#0fa3b8;">Invoiced</div>
<div class="t" style="left:1569.00px;top:562.90px;font-family:'Liberation Sans',sans-serif;font-size:14.5px;font-weight:bold;letter-spacing:0.000px;color:#0a99ae;">SO</div>
<div class="t" style="left:208.30px;top:620.00px;font-family:'Liberation Sans',sans-serif;font-size:14px;font-weight:normal;letter-spacing:0.000px;color:#0fa3b8;">#15678</div>
<div class="t" style="left:513.70px;top:620.50px;font-family:'Liberation Sans',sans-serif;font-size:14px;font-weight:normal;letter-spacing:0.000px;color:#0fa3b8;">Amal's Merch</div>
<div class="t" style="left:713.70px;top:620.50px;font-family:'Liberation Sans',sans-serif;font-size:14px;font-weight:normal;letter-spacing:-0.117px;color:#0fa3b8;">Amal's Beauty</div>
<div class="t" style="left:895.00px;top:620.30px;font-family:'Liberation Sans',sans-serif;font-size:14px;font-weight:normal;letter-spacing:-0.267px;color:#475a68;">January 15, 2024</div>
<div class="t" style="left:1156.06px;top:619.60px;font-family:'Liberation Sans',sans-serif;font-size:14px;font-weight:normal;letter-spacing:0.243px;color:#475a68;">$0</div>
<div class="t" style="left:1234.60px;top:619.60px;font-family:'Liberation Sans',sans-serif;font-size:14px;font-weight:normal;letter-spacing:0.243px;color:#475a68;">$9965429</div>
<div class="t" style="left:1358.50px;top:619.60px;font-family:'Liberation Sans',sans-serif;font-size:14px;font-weight:normal;letter-spacing:0.243px;color:#475a68;">$3488780</div>
<div class="t" style="left:1515.50px;top:619.60px;font-family:'Liberation Sans',sans-serif;font-size:14px;font-weight:normal;letter-spacing:0.250px;color:#475a68;">35%</div>
<div class="t" style="left:1607.20px;top:612.40px;font-family:'Liberation Sans',sans-serif;font-size:14px;font-weight:normal;letter-spacing:0.580px;color:#0fa3b8;">Opportunity</div>
<div class="t" style="left:1607.30px;top:630.50px;font-family:'Liberation Sans',sans-serif;font-size:12px;font-weight:normal;letter-spacing:0.300px;color:#0fa3b8;">Converted</div>
<div class="t" style="left:1569.00px;top:618.90px;font-family:'Liberation Sans',sans-serif;font-size:14.5px;font-weight:bold;letter-spacing:1.000px;color:#0a99ae;">Op</div>
<div class="t" style="left:208.30px;top:676.00px;font-family:'Liberation Sans',sans-serif;font-size:14px;font-weight:normal;letter-spacing:0.280px;color:#0fa3b8;">#15668</div>
<div class="t" style="left:513.70px;top:676.50px;font-family:'Liberation Sans',sans-serif;font-size:14px;font-weight:normal;letter-spacing:0.000px;color:#0fa3b8;">Amal's Merch</div>
<div class="t" style="left:713.70px;top:676.50px;font-family:'Liberation Sans',sans-serif;font-size:14px;font-weight:normal;letter-spacing:-0.117px;color:#0fa3b8;">Amal's Beauty</div>
<div class="t" style="left:895.00px;top:676.30px;font-family:'Liberation Sans',sans-serif;font-size:14px;font-weight:normal;letter-spacing:-0.267px;color:#475a68;">January 11, 2024</div>
<div class="t" style="left:1156.06px;top:675.60px;font-family:'Liberation Sans',sans-serif;font-size:14px;font-weight:normal;letter-spacing:0.243px;color:#475a68;">$0</div>
<div class="t" style="left:1234.60px;top:675.60px;font-family:'Liberation Sans',sans-serif;font-size:14px;font-weight:normal;letter-spacing:0.243px;color:#475a68;">$9965429</div>
<div class="t" style="left:1358.50px;top:675.60px;font-family:'Liberation Sans',sans-serif;font-size:14px;font-weight:normal;letter-spacing:0.243px;color:#475a68;">$3488780</div>
<div class="t" style="left:1515.50px;top:675.60px;font-family:'Liberation Sans',sans-serif;font-size:14px;font-weight:normal;letter-spacing:0.250px;color:#475a68;">35%</div>
<div class="t" style="left:1607.20px;top:668.40px;font-family:'Liberation Sans',sans-serif;font-size:14px;font-weight:normal;letter-spacing:0.580px;color:#0fa3b8;">Opportunity</div>
<div class="t" style="left:1607.30px;top:686.50px;font-family:'Liberation Sans',sans-serif;font-size:12px;font-weight:normal;letter-spacing:0.300px;color:#0fa3b8;">Converted</div>
<div class="t" style="left:1569.00px;top:674.90px;font-family:'Liberation Sans',sans-serif;font-size:14.5px;font-weight:bold;letter-spacing:1.000px;color:#0a99ae;">Op</div>
<div class="t" style="left:208.30px;top:732.00px;font-family:'Liberation Sans',sans-serif;font-size:14px;font-weight:normal;letter-spacing:-0.400px;color:#0fa3b8;">#15691</div>
<div class="t" style="left:513.70px;top:732.50px;font-family:'Liberation Sans',sans-serif;font-size:14px;font-weight:normal;letter-spacing:0.000px;color:#0fa3b8;">Amal's Merch</div>
<div class="t" style="left:713.70px;top:732.50px;font-family:'Liberation Sans',sans-serif;font-size:14px;font-weight:normal;letter-spacing:-0.117px;color:#0fa3b8;">Amal's Beauty</div>
<div class="t" style="left:895.00px;top:732.30px;font-family:'Liberation Sans',sans-serif;font-size:14px;font-weight:normal;letter-spacing:-0.267px;color:#475a68;">January 17, 2024</div>
<div class="t" style="left:1156.06px;top:731.60px;font-family:'Liberation Sans',sans-serif;font-size:14px;font-weight:normal;letter-spacing:0.243px;color:#475a68;">$0</div>
<div class="t" style="left:1274.81px;top:731.60px;font-family:'Liberation Sans',sans-serif;font-size:14px;font-weight:normal;letter-spacing:0.243px;color:#475a68;">$60</div>
<div class="t" style="left:1398.71px;top:731.60px;font-family:'Liberation Sans',sans-serif;font-size:14px;font-weight:normal;letter-spacing:0.243px;color:#475a68;">$20</div>
<div class="t" style="left:1515.50px;top:731.60px;font-family:'Liberation Sans',sans-serif;font-size:14px;font-weight:normal;letter-spacing:0.250px;color:#475a68;">40%</div>
<div class="t" style="left:1607.20px;top:724.40px;font-family:'Liberation Sans',sans-serif;font-size:14px;font-weight:normal;letter-spacing:-0.160px;color:#0fa3b8;">Sales Order</div>
<div class="t" style="left:1607.30px;top:742.50px;font-family:'Liberation Sans',sans-serif;font-size:12px;font-weight:normal;letter-spacing:0.300px;color:#0fa3b8;">In Production</div>
<div class="t" style="left:1569.00px;top:730.90px;font-family:'Liberation Sans',sans-serif;font-size:14.5px;font-weight:bold;letter-spacing:0.000px;color:#0a99ae;">SO</div>
<div class="t" style="left:208.30px;top:788.00px;font-family:'Liberation Sans',sans-serif;font-size:14px;font-weight:normal;letter-spacing:0.280px;color:#0fa3b8;">#15668</div>
<div class="t" style="left:513.70px;top:788.50px;font-family:'Liberation Sans',sans-serif;font-size:14px;font-weight:normal;letter-spacing:0.000px;color:#0fa3b8;">Amal's Merch</div>
<div class="t" style="left:713.70px;top:788.50px;font-family:'Liberation Sans',sans-serif;font-size:14px;font-weight:normal;letter-spacing:-0.117px;color:#0fa3b8;">Amal's Beauty</div>
<div class="t" style="left:895.00px;top:788.30px;font-family:'Liberation Sans',sans-serif;font-size:14px;font-weight:normal;letter-spacing:-0.267px;color:#475a68;">January 11, 2024</div>
<div class="t" style="left:1156.06px;top:787.60px;font-family:'Liberation Sans',sans-serif;font-size:14px;font-weight:normal;letter-spacing:0.243px;color:#475a68;">$0</div>
<div class="t" style="left:1274.81px;top:787.60px;font-family:'Liberation Sans',sans-serif;font-size:14px;font-weight:normal;letter-spacing:0.243px;color:#475a68;">$45</div>
<div class="t" style="left:1398.71px;top:787.60px;font-family:'Liberation Sans',sans-serif;font-size:14px;font-weight:normal;letter-spacing:0.243px;color:#475a68;">$14</div>
<div class="t" style="left:1515.50px;top:787.60px;font-family:'Liberation Sans',sans-serif;font-size:14px;font-weight:normal;letter-spacing:0.250px;color:#475a68;">40%</div>
<div class="t" style="left:1607.20px;top:780.40px;font-family:'Liberation Sans',sans-serif;font-size:14px;font-weight:normal;letter-spacing:-0.160px;color:#0fa3b8;">Sales Order</div>
<div class="t" style="left:1607.30px;top:798.50px;font-family:'Liberation Sans',sans-serif;font-size:12px;font-weight:normal;letter-spacing:0.500px;color:#0fa3b8;">New</div>
<div class="t" style="left:1569.00px;top:786.90px;font-family:'Liberation Sans',sans-serif;font-size:14.5px;font-weight:bold;letter-spacing:0.000px;color:#0a99ae;">SO</div>
<div class="t" style="left:208.30px;top:844.00px;font-family:'Liberation Sans',sans-serif;font-size:14px;font-weight:normal;letter-spacing:-0.400px;color:#0fa3b8;">#15691</div>
<div class="t" style="left:513.70px;top:844.50px;font-family:'Liberation Sans',sans-serif;font-size:14px;font-weight:normal;letter-spacing:0.000px;color:#0fa3b8;">Amal's Merch</div>
<div class="t" style="left:713.70px;top:844.50px;font-family:'Liberation Sans',sans-serif;font-size:14px;font-weight:normal;letter-spacing:-0.117px;color:#0fa3b8;">Amal's Beauty</div>
<div class="t" style="left:895.00px;top:844.30px;font-family:'Liberation Sans',sans-serif;font-size:14px;font-weight:normal;letter-spacing:-0.267px;color:#475a68;">January 17, 2024</div>
<div class="t" style="left:1156.06px;top:843.60px;font-family:'Liberation Sans',sans-serif;font-size:14px;font-weight:normal;letter-spacing:0.243px;color:#475a68;">$0</div>
<div class="t" style="left:1234.60px;top:843.60px;font-family:'Liberation Sans',sans-serif;font-size:14px;font-weight:normal;letter-spacing:0.243px;color:#475a68;">$9964556</div>
<div class="t" style="left:1358.50px;top:843.60px;font-family:'Liberation Sans',sans-serif;font-size:14px;font-weight:normal;letter-spacing:0.243px;color:#475a68;">$3487836</div>
<div class="t" style="left:1515.50px;top:843.60px;font-family:'Liberation Sans',sans-serif;font-size:14px;font-weight:normal;letter-spacing:0.250px;color:#475a68;">35%</div>
<div class="t" style="left:1607.20px;top:836.40px;font-family:'Liberation Sans',sans-serif;font-size:14px;font-weight:normal;letter-spacing:0.580px;color:#0fa3b8;">Opportunity</div>
<div class="t" style="left:1607.30px;top:854.50px;font-family:'Liberation Sans',sans-serif;font-size:12px;font-weight:normal;letter-spacing:0.300px;color:#0fa3b8;">Converted</div>
<div class="t" style="left:1569.00px;top:842.90px;font-family:'Liberation Sans',sans-serif;font-size:14.5px;font-weight:bold;letter-spacing:1.000px;color:#0a99ae;">Op</div>
<div class="t" style="left:208.30px;top:900.00px;font-family:'Liberation Sans',sans-serif;font-size:14px;font-weight:normal;letter-spacing:0.280px;color:#0fa3b8;">#15686</div>
<div class="t" style="left:513.70px;top:900.50px;font-family:'Liberation Sans',sans-serif;font-size:14px;font-weight:normal;letter-spacing:0.000px;color:#0fa3b8;">Amal's Merch</div>
<div class="t" style="left:713.70px;top:900.50px;font-family:'Liberation Sans',sans-serif;font-size:14px;font-weight:normal;letter-spacing:-0.117px;color:#0fa3b8;">Amal's Beauty</div>
<div class="t" style="left:894.00px;top:900.30px;font-family:'Liberation Sans',sans-serif;font-size:14px;font-weight:normal;letter-spacing:-0.267px;color:#475a68;">May 9, 2024</div>
<div class="t" style="left:1156.06px;top:899.60px;font-family:'Liberation Sans',sans-serif;font-size:14px;font-weight:normal;letter-spacing:0.243px;color:#475a68;">$0</div>
<div class="t" style="left:1274.81px;top:899.60px;font-family:'Liberation Sans',sans-serif;font-size:14px;font-weight:normal;letter-spacing:0.243px;color:#475a68;">$37</div>
<div class="t" style="left:1399.71px;top:899.60px;font-family:'Liberation Sans',sans-serif;font-size:14px;font-weight:normal;letter-spacing:0.243px;color:#475a68;">$11</div>
<div class="t" style="left:1515.50px;top:899.60px;font-family:'Liberation Sans',sans-serif;font-size:14px;font-weight:normal;letter-spacing:0.250px;color:#475a68;">29%</div>
<div class="t" style="left:1607.20px;top:892.40px;font-family:'Liberation Sans',sans-serif;font-size:14px;font-weight:normal;letter-spacing:0.233px;color:#0fa3b8;">Invoice</div>
<div class="t" style="left:1607.30px;top:910.50px;font-family:'Liberation Sans',sans-serif;font-size:12px;font-weight:normal;letter-spacing:0.471px;color:#0fa3b8;">Exported</div>
<div class="t" style="left:208.30px;top:956.00px;font-family:'Liberation Sans',sans-serif;font-size:14px;font-weight:normal;letter-spacing:0.280px;color:#0fa3b8;">#15686</div>
<div class="t" style="left:513.70px;top:956.50px;font-family:'Liberation Sans',sans-serif;font-size:14px;font-weight:normal;letter-spacing:0.000px;color:#0fa3b8;">Amal's Merch</div>
<div class="t" style="left:713.70px;top:956.50px;font-family:'Liberation Sans',sans-serif;font-size:14px;font-weight:normal;letter-spacing:-0.117px;color:#0fa3b8;">Amal's Beauty</div>
<div class="t" style="left:895.00px;top:956.30px;font-family:'Liberation Sans',sans-serif;font-size:14px;font-weight:normal;letter-spacing:-0.267px;color:#475a68;">January 16, 2024</div>
<div class="t" style="left:1156.06px;top:955.60px;font-family:'Liberation Sans',sans-serif;font-size:14px;font-weight:normal;letter-spacing:0.243px;color:#475a68;">$0</div>
<div class="t" style="left:1274.81px;top:955.60px;font-family:'Liberation Sans',sans-serif;font-size:14px;font-weight:normal;letter-spacing:0.243px;color:#475a68;">$37</div>
<div class="t" style="left:1399.71px;top:955.60px;font-family:'Liberation Sans',sans-serif;font-size:14px;font-weight:normal;letter-spacing:0.243px;color:#475a68;">$11</div>
<div class="t" style="left:1515.50px;top:955.60px;font-family:'Liberation Sans',sans-serif;font-size:14px;font-weight:normal;letter-spacing:0.250px;color:#475a68;">29%</div>
<div class="t" style="left:1607.20px;top:948.40px;font-family:'Liberation Sans',sans-serif;font-size:14px;font-weight:normal;letter-spacing:-0.160px;color:#0fa3b8;">Sales Order</div>
<div class="t" style="left:1607.30px;top:966.50px;font-family:'Liberation Sans',sans-serif;font-size:12px;font-weight:normal;letter-spacing:0.500px;color:#0fa3b8;">New</div>
<div class="t" style="left:1569.00px;top:954.90px;font-family:'Liberation Sans',sans-serif;font-size:14.5px;font-weight:bold;letter-spacing:0.000px;color:#0a99ae;">SO</div>
<div class="t" style="left:37.30px;top:913.50px;font-family:'Liberation Sans',sans-serif;font-size:19px;font-weight:normal;letter-spacing:0.000px;color:#fff;">commonsku</div>
<div class="t" style="left:436.95px;top:449.80px;font-family:'Liberation Sans',sans-serif;font-size:20px;font-weight:bold;letter-spacing:1.700px;color:#fff;-webkit-text-stroke:0.6px #fff">HA</div>
<div class="t" style="left:436.95px;top:505.80px;font-family:'Liberation Sans',sans-serif;font-size:20px;font-weight:bold;letter-spacing:1.700px;color:#fff;-webkit-text-stroke:0.6px #fff">HA</div>
<div class="t" style="left:436.95px;top:561.80px;font-family:'Liberation Sans',sans-serif;font-size:20px;font-weight:bold;letter-spacing:1.700px;color:#fff;-webkit-text-stroke:0.6px #fff">HA</div>
<div class="t" style="left:436.95px;top:617.80px;font-family:'Liberation Sans',sans-serif;font-size:20px;font-weight:bold;letter-spacing:1.700px;color:#fff;-webkit-text-stroke:0.6px #fff">HA</div>
<div class="t" style="left:436.95px;top:673.80px;font-family:'Liberation Sans',sans-serif;font-size:20px;font-weight:bold;letter-spacing:1.700px;color:#fff;-webkit-text-stroke:0.6px #fff">HA</div>
<div class="t" style="left:436.95px;top:729.80px;font-family:'Liberation Sans',sans-serif;font-size:20px;font-weight:bold;letter-spacing:1.700px;color:#fff;-webkit-text-stroke:0.6px #fff">HA</div>
<div class="t" style="left:436.95px;top:785.80px;font-family:'Liberation Sans',sans-serif;font-size:20px;font-weight:bold;letter-spacing:1.700px;color:#fff;-webkit-text-stroke:0.6px #fff">HA</div>
<div class="t" style="left:436.95px;top:841.80px;font-family:'Liberation Sans',sans-serif;font-size:20px;font-weight:bold;letter-spacing:1.700px;color:#fff;-webkit-text-stroke:0.6px #fff">HA</div>
<div class="t" style="left:436.95px;top:897.80px;font-family:'Liberation Sans',sans-serif;font-size:20px;font-weight:bold;letter-spacing:1.700px;color:#fff;-webkit-text-stroke:0.6px #fff">HA</div>
<div class="t" style="left:436.95px;top:953.80px;font-family:'Liberation Sans',sans-serif;font-size:20px;font-weight:bold;letter-spacing:1.700px;color:#fff;-webkit-text-stroke:0.6px #fff">HA</div><svg class="a" style="left:1050px;top:405px" width="32" height="36" viewBox="1050 405 32 36">
<path d="M1062.6 426.2 V414.3 Q1062.6 412.1 1064.4 412.1 Q1066.2 412.1 1066.2 414.3 V417.8 Q1067 416.9 1068.2 417.1 Q1069.2 417.3 1069.5 418.2 Q1070.6 417.6 1071.8 418 Q1072.6 418.4 1072.7 419.3 Q1073.6 419 1074.3 419.6 Q1074.9 420.2 1074.9 421.5 V428.3 Q1074.9 432.4 1072.2 434.6 Q1070.4 435.8 1067 435.8 Q1064.4 435.8 1063 434.2 L1057.8 427.6 Q1056.8 426.2 1057.6 425.2 Q1058.9 424 1060.6 425 Z" fill="#fff" stroke="#111" stroke-width="1.25" stroke-linejoin="round"/>
<path d="M1066.2 417.8 V422.8 M1069.5 418.2 V422.8 M1072.7 419.3 V422.8" stroke="#111" stroke-width="1.1" fill="none"/>
</svg>
</body></html>
